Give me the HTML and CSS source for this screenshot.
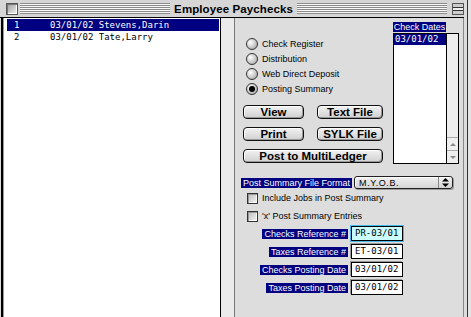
FILE: index.html
```html
<!DOCTYPE html>
<html lang="en">
<head>
    <meta charset="UTF-8">
    <title>Employee Paychecks</title>
    <link rel="stylesheet" href="styles.css">
</head>
<body>
    <div class="window">
        <div class="titlebar">
            <span class="closebox"></span>
            <span class="stripes"></span>
            <span class="title">Employee Paychecks</span>
            <span class="stripes"></span>
            <span class="shadebox"></span>
        </div>
        <div class="content">
            <div class="list">
                <div class="row selected"><span class="num">1</span><span>03/01/02 Stevens,Darin</span></div>
                <div class="row"><span class="num">2</span><span>03/01/02 Tate,Larry</span></div>
            </div>
            <div class="vscroll"></div>
            <div class="panel">
                <div class="top">
                    <div class="controls">
                        <div class="radios">
                            <div class="radio"><span class="dot"></span>Check Register</div>
                            <div class="radio"><span class="dot"></span>Distribution</div>
                            <div class="radio"><span class="dot"></span>Web Direct Deposit</div>
                            <div class="radio"><span class="dot on"></span>Posting Summary</div>
                        </div>
                        <div class="buttons">
                            <button>View</button>
                            <button>Text File</button>
                            <button>Print</button>
                            <button>SYLK File</button>
                            <button class="wide">Post to MultiLedger</button>
                        </div>
                    </div>
                    <div class="dates">
                        <div class="dates-head">Check Dates</div>
                        <div class="dates-box">
                            <div class="dates-list">
                                <div class="date selected">03/01/02</div>
                            </div>
                            <div class="dates-scroll">
                                <span class="arrow up"></span>
                                <span class="arrow down"></span>
                            </div>
                        </div>
                    </div>
                </div>
                <div class="format-row">
                    <span class="tag">Post Summary File Format</span>
                    <div class="popup">
                        <span class="popup-text">M.Y.O.B.</span>
                        <span class="popup-arrows">
                            <svg width="7" height="9" viewBox="0 0 7 9"><path d="M3.5 0 L7 3.5 H0 Z M0 5.5 H7 L3.5 9 Z" fill="#000"/></svg>
                        </span>
                    </div>
                </div>
                <div class="check"><span class="box"></span>Include Jobs in Post Summary</div>
                <div class="check"><span class="box"></span>'x' Post Summary Entries</div>
                <div class="fields">
                    <span class="tag">Checks Reference #</span>
                    <span class="field focus">PR-03/01</span>
                    <span class="tag">Taxes Reference #</span>
                    <span class="field">ET-03/01</span>
                    <span class="tag">Checks Posting Date</span>
                    <span class="field">03/01/02</span>
                    <span class="tag">Taxes Posting Date</span>
                    <span class="field">03/01/02</span>
                </div>
            </div>
        </div>
    </div>
</body>
</html>
```

FILE: styles.css
```css
body {
    margin: 0;
    background-color: #e4e4e4;
    font-family: "Liberation Sans", Arial, sans-serif;
    font-size: 9px;
    color: #000;
}
.window {
    width: 468px;
    height: 317px;
    box-sizing: border-box;
    background-color: #dcdcdc;
    border-right: 1px solid #333;
    padding-right: 3px;
    overflow: hidden;
}
.titlebar {
    height: 17px;
    display: flex;
    align-items: center;
    padding: 0 0 0 6px;
    border-bottom: 1px solid #000;
    background-color: #d6d6d6;
}
.closebox {
    width: 10px;
    height: 10px;
    border: 1px solid #555;
    background: linear-gradient(135deg, #9a9a9a, #f4f4f4);
    box-shadow: inset 1px 1px #777, inset -1px -1px #fff;
    margin-right: 2px;
}
.stripes {
    flex: 1;
    height: 11px;
    background: repeating-linear-gradient(to bottom, #8a8a8a 0 1px, #f8f8f8 1px 2px);
}
.title {
    font-size: 11.5px;
    font-weight: bold;
    padding: 0 4px;
    letter-spacing: 0.1px;
}
.shadebox {
    width: 10px;
    height: 10px;
    margin: 0 0 0 5px;
    border: 1px solid #555;
    background: linear-gradient(to bottom, #ccc 0 3px, #333 3px 4px, #eee 4px 6px, #333 6px 7px, #ccc 7px);
}
.content {
    display: flex;
    height: 299px;
}
.list {
    width: 220px;
    box-sizing: border-box;
    margin-left: 1px;
    border-left: 2px solid #000;
    border-right: 1px solid #000;
    background-color: #fff;
    padding: 1px 1px 0 4px;
    box-shadow: inset 1px 0 #999;
    font-family: "DejaVu Sans Mono", monospace;
    font-size: 9px;
}
.row {
    height: 12px;
    line-height: 12px;
    padding-left: 7px;
    display: flex;
    white-space: pre;
}
.row.selected {
    background-color: #000080;
    color: #fff;
}
.num {
    width: 36px;
}
.vscroll {
    width: 13px;
    background-color: #ebebeb;
    border-right: 1px solid #777;
}
.panel {
    flex: 1;
    padding-top: 4px;
    border-right: 1px solid #888;
    background-color: #dddddd;
}
.top {
    display: flex;
}
.controls {
    width: 158px;
    padding-left: 7px;
    box-sizing: border-box;
}
.radios {
    margin: 14px 0 0 4px;
}
.radio {
    height: 15px;
    display: flex;
    align-items: center;
    gap: 4px;
}
.dot {
    width: 10px;
    height: 10px;
    border: 1px solid #333;
    border-radius: 50%;
    background: radial-gradient(circle at 35% 35%, #fff, #9c9c9c);
    display: flex;
    align-items: center;
    justify-content: center;
}
.dot.on::after {
    content: "";
    width: 6px;
    height: 6px;
    border-radius: 50%;
    background-color: #000;
}
.buttons {
    display: grid;
    grid-template-columns: 61px 66px;
    column-gap: 13px;
    row-gap: 8px;
    margin: 9px 0 0 1px;
}
.buttons button {
    height: 14px;
    padding: 0;
    border: 1px solid #111;
    border-radius: 4px;
    background: linear-gradient(to bottom, #f2f2f2, #d0d0d0);
    box-shadow: inset 1px 1px #fff, inset -1px -1px #999;
    font-family: "Liberation Sans", Arial, sans-serif;
    font-weight: bold;
    font-size: 11.5px;
    line-height: 12px;
    color: #000;
}
.buttons .wide {
    grid-column: 1 / 3;
}
.dates {
    width: 66px;
}
.dates-head {
    width: 53px;
    height: 10px;
    line-height: 10px;
    text-align: center;
    background-color: #000080;
    color: #fff;
    margin-bottom: 1px;
}
.dates-box {
    height: 131px;
    box-sizing: border-box;
    border: 1px solid #000;
    background-color: #fff;
    display: flex;
}
.dates-list {
    flex: 1;
    border-right: 1px solid #000;
}
.date {
    height: 11px;
    line-height: 11px;
    padding-left: 1px;
    font-family: "DejaVu Sans Mono", monospace;
    font-size: 9px;
}
.date.selected {
    background-color: #000080;
    color: #fff;
}
.dates-scroll {
    width: 11px;
    background-color: #eeeeee;
    display: flex;
    flex-direction: column;
    justify-content: flex-end;
}
.arrow {
    height: 12px;
    border-top: 1px solid #aaa;
    display: flex;
    align-items: center;
    justify-content: center;
}
.arrow::after {
    content: "";
    border-left: 3px solid transparent;
    border-right: 3px solid transparent;
}
.arrow.up::after {
    border-bottom: 3px solid #888;
}
.arrow.down::after {
    border-top: 3px solid #888;
}
.format-row {
    display: flex;
    align-items: center;
    gap: 2px;
    margin: 12px 0 0 6px;
}
.tag {
    background-color: #000080;
    color: #fff;
    height: 10px;
    line-height: 10px;
    padding: 0 2px;
    white-space: nowrap;
}
.popup {
    width: 99px;
    height: 13px;
    box-sizing: border-box;
    border: 1px solid #222;
    border-radius: 3px;
    background: linear-gradient(to bottom, #f0f0f0, #d4d4d4);
    box-shadow: inset 1px 1px #fff, 1px 1px #999;
    display: flex;
    align-items: center;
}
.popup-text {
    flex: 1;
    padding-left: 4px;
    letter-spacing: 0.6px;
}
.popup-arrows {
    width: 13px;
    height: 11px;
    border-left: 1px solid #888;
    display: flex;
    align-items: center;
    justify-content: center;
}
.check {
    height: 18px;
    display: flex;
    align-items: center;
    gap: 4px;
    padding-left: 12px;
}
.check:first-of-type {
    margin-top: 3px;
}
.box {
    width: 9px;
    height: 9px;
    border: 1px solid #333;
    background: linear-gradient(135deg, #bdbdbd, #f4f4f4);
    box-shadow: inset 1px 1px #999, inset -1px -1px #fff;
}
.fields {
    display: grid;
    grid-template-columns: 113px 52px;
    column-gap: 3px;
    row-gap: 3px;
    align-items: center;
    justify-items: end;
    margin-top: 1px;
}
.field {
    justify-self: start;
    width: 52px;
    height: 15px;
    box-sizing: border-box;
    border: 1px solid #000;
    background-color: #fff;
    box-shadow: -1px -1px #999;
    padding-left: 3px;
    line-height: 13px;
    font-family: "DejaVu Sans Mono", monospace;
    font-size: 9px;
}
.field.focus {
    background-color: #ccffff;
    box-shadow: 0 0 0 1px #44bbee;
}
```
